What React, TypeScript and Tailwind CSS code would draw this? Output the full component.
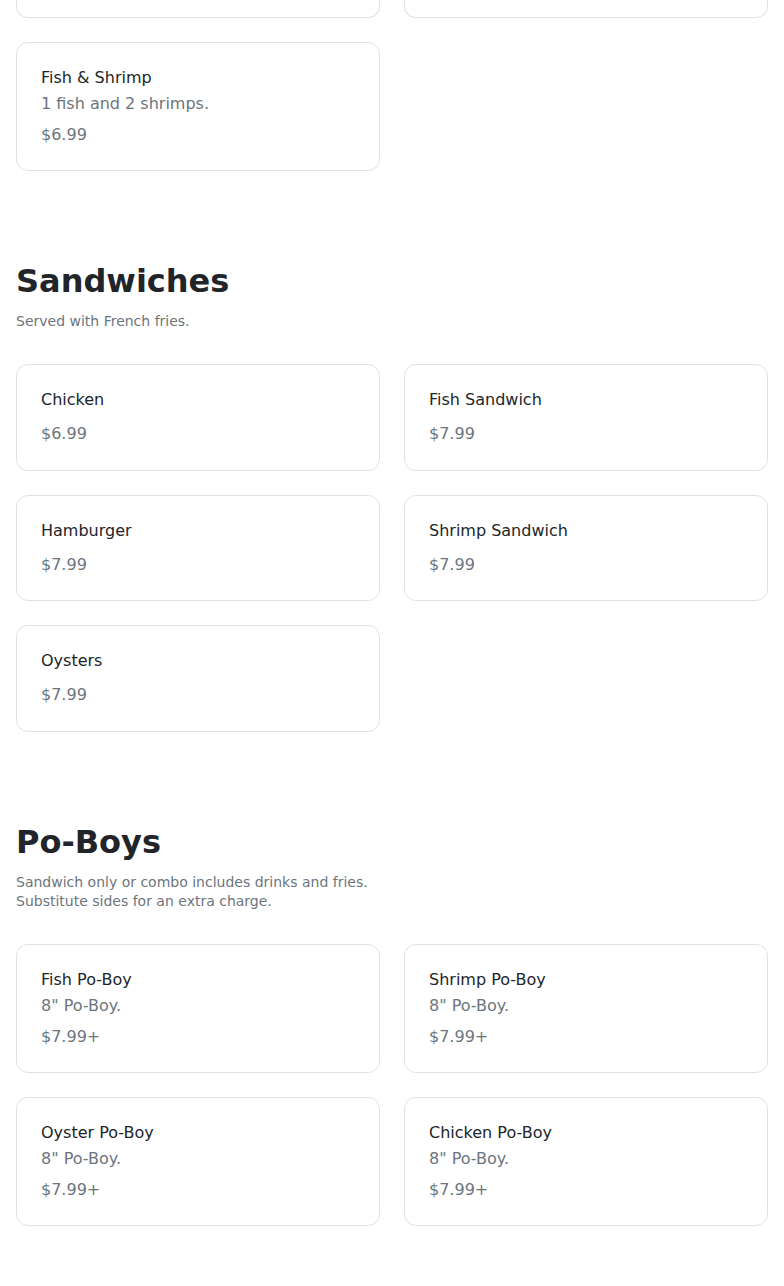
import React from 'react';

type Item = {
  name: string;
  description?: string;
  price: string;
};

type Section = {
  title: string;
  subtitle: string[];
  items: Item[];
};

const sections: Section[] = [
  {
    title: 'Sandwiches',
    subtitle: ['Served with French fries.'],
    items: [
      { name: 'Chicken', price: '$6.99' },
      { name: 'Fish Sandwich', price: '$7.99' },
      { name: 'Hamburger', price: '$7.99' },
      { name: 'Shrimp Sandwich', price: '$7.99' },
      { name: 'Oysters', price: '$7.99' },
    ],
  },
  {
    title: 'Po-Boys',
    subtitle: ['Sandwich only or combo includes drinks and fries.', 'Substitute sides for an extra charge.'],
    items: [
      { name: 'Fish Po-Boy', description: '8" Po-Boy.', price: '$7.99+' },
      { name: 'Shrimp Po-Boy', description: '8" Po-Boy.', price: '$7.99+' },
      { name: 'Oyster Po-Boy', description: '8" Po-Boy.', price: '$7.99+' },
      { name: 'Chicken Po-Boy', description: '8" Po-Boy.', price: '$7.99+' },
    ],
  },
];

const MenuCard: React.FC<{ item: Item }> = ({ item }) => (
  <div
    className={`rounded-xl border border-[#dfe1e4] bg-white px-6 pt-[25px] ${
      item.description ? 'pb-[23px]' : 'pb-[23.5px]'
    }`}
  >
    <div className="text-base leading-5 text-[#212529]">{item.name}</div>
    {item.description && <div className="mt-1 text-base leading-6 text-[#6c757d]">{item.description}</div>}
    <div className={`${item.description ? 'mt-[7px]' : 'mt-3'} text-base leading-6 text-[#6c757d]`}>{item.price}</div>
  </div>
);

export default function App() {
  return (
    <div className="min-h-[1286px] bg-white px-4 pb-14 font-['DejaVu_Sans',sans-serif]">
      {/* end of the previous section, scrolled mostly out of view */}
      <div className="grid grid-cols-2 gap-6">
        <div className="h-[18px] rounded-b-xl border border-t-0 border-[#dfe1e4]" />
        <div className="h-[18px] rounded-b-xl border border-t-0 border-[#dfe1e4]" />
        <MenuCard item={{ name: 'Fish & Shrimp', description: '1 fish and 2 shrimps.', price: '$6.99' }} />
      </div>

      {sections.map((section) => (
        <section key={section.title} className="mt-[91px]">
          <h2 className="text-[32px] font-bold leading-[38px] text-[#212529]">{section.title}</h2>
          <div className="mt-3 text-sm leading-snug text-[#6c757d]">
            {section.subtitle.map((line) => (
              <div key={line}>{line}</div>
            ))}
          </div>
          <div className="mt-[33px] grid grid-cols-2 gap-6">
            {section.items.map((item) => (
              <MenuCard key={item.name} item={item} />
            ))}
          </div>
        </section>
      ))}
    </div>
  );
}
